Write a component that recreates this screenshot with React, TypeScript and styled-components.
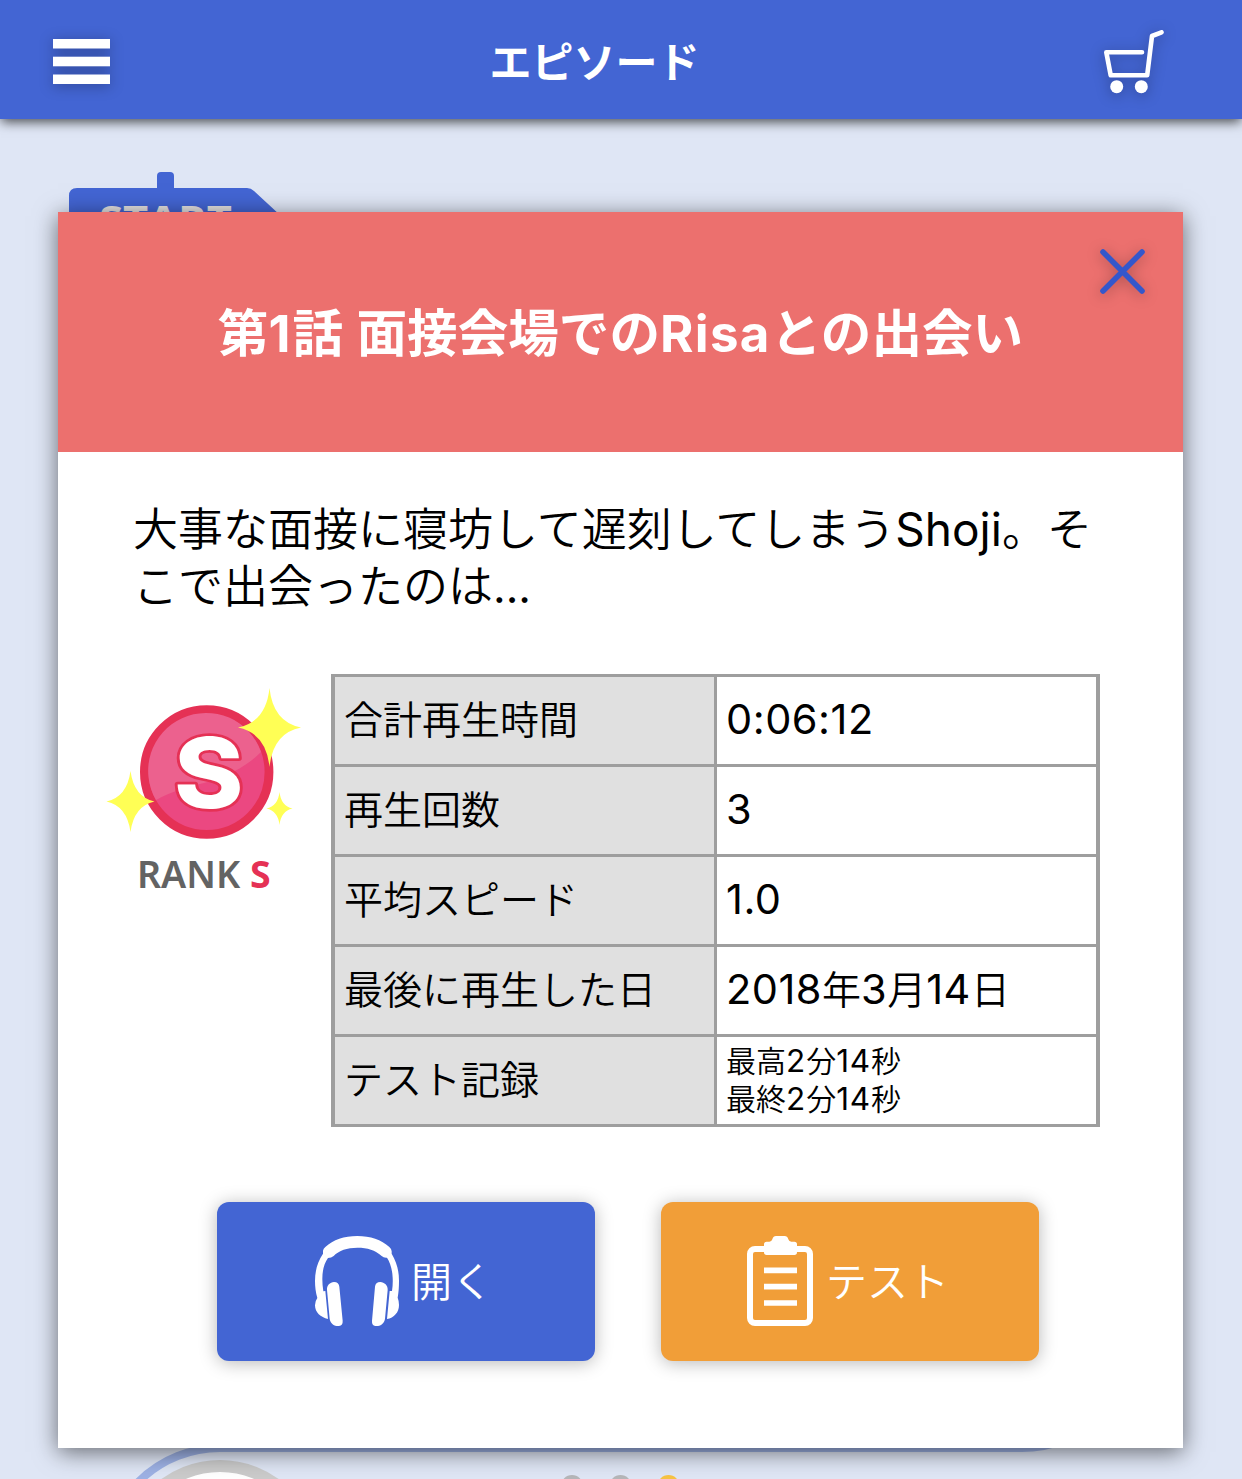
import React from "react";
import styled, { createGlobalStyle } from "styled-components";

const colors = {
  blue: "#4365d3",
  sky: "#dfe6f5",
  coral: "#ec706e",
  orange: "#f19e38",
  line: "#9e9e9e",
  label: "#e0e0e0",
  route: "#9db1e4",
};

const GlobalStyle = createGlobalStyle`
  * { box-sizing: border-box; }
  html, body { margin: 0; padding: 0; }
  body {
    font-family: "Noto Sans CJK JP", sans-serif;
    color: #000;
    background: ${colors.sky};
    overflow: hidden;
  }
  button { font: inherit; border: 0; padding: 0; background: none; }
  svg { display: block; overflow: visible; }
`;

const Page = styled.div`
  position: relative;
  width: 1242px;
  height: 1479px;
  display: flex;
  flex-direction: column;
  overflow: hidden;
  background: ${colors.sky};
`;

const TopBar = styled.header`
  flex: none;
  height: 119px;
  padding: 4px 78px 0 53px;
  display: grid;
  grid-template-columns: 60px 1fr 60px;
  align-items: center;
  background: ${colors.blue};
  box-shadow: 0 4px 11px -1px rgba(0, 0, 0, 0.68);
`;

const TopTitle = styled.h1`
  margin: -4px 0 0 -28px;
  font-size: 42px;
  line-height: 60px;
  font-weight: 700;
  color: #fff;
  text-align: center;
`;

const IconButton = styled.button`
  display: block;
  filter: drop-shadow(0 2px 7px rgba(0, 0, 0, 0.3));
`;

const Course = styled.main`
  flex: 1;
  display: flex;
  flex-direction: column;
  justify-content: space-between;
`;

const SignHolder = styled.div`
  padding: 53px 0 0 69px;
`;

const Dialog = styled.section`
  position: absolute;
  left: 58px;
  top: 212px;
  width: 1125px;
  height: 1236px;
  display: flex;
  flex-direction: column;
  background: #fff;
  box-shadow: 0 4px 22px rgba(0, 0, 0, 0.55);
`;

const DialogHead = styled.div`
  position: relative;
  flex: none;
  height: 240px;
  display: flex;
  align-items: center;
  justify-content: center;
  padding-bottom: 5px;
  background: ${colors.coral};
`;

const DialogTitle = styled.h2`
  margin: 0;
  font-size: 50.6px;
  line-height: 60px;
  font-weight: 700;
  color: #fff;
  white-space: nowrap;
  word-spacing: 2px;
`;

const CloseButton = styled(IconButton)`
  position: absolute;
  right: 38px;
  top: 37px;
`;

const Latin = styled.span<{ $size: number; $spacing?: number }>`
  font-family: Inter, sans-serif;
  font-size: ${(p) => p.$size}px;
  letter-spacing: ${(p) => p.$spacing ?? 0}px;
  line-height: 1;
`;

const Summary = styled.p`
  margin: 46px 0 0 75px;
  font-size: 45px;
  line-height: 57px;
  font-weight: 350;
  white-space: nowrap;
  ${Latin} { font-weight: 400; }
`;

const Details = styled.div`
  display: flex;
  align-items: flex-start;
  margin-top: 62px;
  padding-left: 49px;
`;

const Rank = styled.div`
  width: 224px;
  padding-top: 14px;
`;

const RankLabel = styled.div`
  width: 200px;
  padding-left: 30px;
  margin-top: 7px;
  font-family: "Noto Sans", sans-serif;
  font-size: 37.5px;
  line-height: 54px;
  font-weight: 600;
  color: #636363;
  white-space: nowrap;
  b { color: #e53155; font-weight: 700; }
`;

const Stats = styled.dl`
  margin: 0;
  width: 769px;
  border: solid ${colors.line};
  border-width: 3px 4px 0;
`;

const StatRow = styled.div`
  display: grid;
  grid-template-columns: 382px 1fr;
  height: 90px;
  border-bottom: 3px solid ${colors.line};
`;

const StatLabel = styled.dt`
  padding-left: 9px;
  border-right: 3px solid ${colors.line};
  background: ${colors.label};
  font-size: 39px;
  line-height: 81px;
  font-weight: 350;
  white-space: nowrap;
`;

const StatValue = styled.dd<{ $small?: boolean }>`
  margin: 0;
  padding-left: 9px;
  padding-top: ${(p) => (p.$small ? 3 : 0)}px;
  font-size: ${(p) => (p.$small ? 30 : 39)}px;
  line-height: ${(p) => (p.$small ? 38 : 81)}px;
  font-weight: 350;
  white-space: nowrap;
  ${Latin} { font-weight: 400; }
`;

const Actions = styled.div`
  display: flex;
  gap: 66px;
  margin: 75px 0 0 159.4px;
`;

const ActionButton = styled.button<{ $color: string; $inset: number; $gap: number }>`
  width: 378px;
  height: 159px;
  display: flex;
  align-items: center;
  gap: ${(p) => p.$gap}px;
  padding-left: ${(p) => p.$inset}px;
  padding-bottom: 1px;
  border-radius: 12px;
  background: ${(p) => p.$color};
  box-shadow: 0 2px 18px rgba(0, 0, 0, 0.28);
  color: #fff;
`;

const ActionText = styled.span`
  padding-bottom: 5px;
  font-size: 41px;
  line-height: 60px;
  font-weight: 350;
  white-space: nowrap;
`;

const MenuIcon = () => (
  <svg width="57" height="45" viewBox="0 0 57 45" fill="#fff">
    <rect width="57" height="9.5" />
    <rect y="17.7" width="57" height="9.6" />
    <rect y="35.5" width="57" height="9.5" />
  </svg>
);

const CartIcon = () => (
  <svg width="60" height="63" viewBox="0 0 60 63">
    <path
      d="M38 22.2H2.3L6.7 45.2H43.2L48 6L57.5 2.3"
      fill="none"
      stroke="#fff"
      strokeWidth="4.6"
      strokeLinecap="round"
      strokeLinejoin="round"
    />
    <circle cx="12.7" cy="56.7" r="6.5" fill="#fff" />
    <circle cx="37.3" cy="56.7" r="6.5" fill="#fff" />
  </svg>
);

const CloseIcon = () => (
  <svg width="45" height="45" viewBox="0 0 45 45">
    <path d="M3 3L42 42M42 3L3 42" stroke="#3457cb" strokeWidth="5.6" strokeLinecap="round" />
  </svg>
);

const StartSign = () => (
  <svg width="230" height="100" viewBox="0 0 230 100">
    <rect x="88" y="0" width="17" height="40" rx="4" fill={colors.blue} />
    <path d="M0 24Q0 16 8 16H178Q182 16 185 19L225 56L185 94H0Z" fill={colors.blue} />
    <text
      x="30"
      y="62"
      textLength="133"
      lengthAdjust="spacingAndGlyphs"
      fill="#e4e1e0"
      fontFamily="Open Sans, sans-serif"
      fontWeight="700"
      fontSize="39"
    >
      START
    </text>
  </svg>
);

const CourseMap = () => (
  <svg width="1242" height="149" viewBox="0 1330 1242 149">
    <path
      d="M105 1563A115 115 0 0 1 220 1448H1022A115 115 0 0 0 1137 1333"
      fill="none"
      stroke={colors.route}
      strokeWidth="8"
    />
    <circle cx="220" cy="1560" r="94" fill="#fff" stroke="#cbcbcb" strokeWidth="12" />
    <circle cx="572" cy="1486" r="11" fill="#b5b6b9" />
    <circle cx="620.5" cy="1486" r="11" fill="#b5b6b9" />
    <circle cx="668.5" cy="1486" r="11" fill="#f6c344" />
  </svg>
);

const RankBadge = () => (
  <svg width="196" height="152" viewBox="107 688 196 152">
    <circle cx="206.7" cy="772" r="62.3" fill="#eb4881" stroke="#e53155" strokeWidth="8.8" />
    <path
      d="M156 800A58 58 0 1 1 261 752C246 767 228 776 204 783C184 788 170 792 156 800Z"
      fill="#ec618e"
    />
    <text
      transform="translate(208.8 807.5) scale(1.08 1)"
      textAnchor="middle"
      fontFamily="Inter, sans-serif"
      fontWeight="800"
      fontSize="97.5"
      fill="#fff"
      stroke="#e53155"
      strokeWidth="5.5"
      strokeLinejoin="round"
      paintOrder="stroke"
    >
      S
    </text>
    <g fill="#ffff55">
      <path d="M269.5 688Q273 722 301 727.5Q273 733 269.5 767Q266 733 238 727.5Q266 722 269.5 688Z" />
      <path d="M130.5 771Q134 797 154.5 801.5Q134 806 130.5 832Q127 806 106.5 801.5Q127 797 130.5 771Z" />
      <path d="M279.5 792Q281 806 292.5 808.5Q281 811 279.5 825Q278 811 266.5 808.5Q278 806 279.5 792Z" />
    </g>
  </svg>
);

const HeadphonesIcon = () => (
  <svg width="84" height="90" viewBox="345 138 252 270" fill="#fff">
    <path d="M369 182Q370 176 376 171C400 149 432 138 472 138C511 138 544 149 568 171Q575 177 575 184V191C590 216 597 242 597 272C597 291 596 306 593 323Q597 333 597 345C597 367 582 384 561 387L569 303H576Q579 285 578 263C577 240 571 218 561 203Q551 204 545 198C525 180 503 173 472 173C441 173 417 181 401 198Q394 204 384 204C373 220 367 239 367 267Q367 287 370 304L376 303L384 387C362 382 345 368 345 346Q345 333 352 324C347 306 345 291 345 273C345 242 353 214 369 191Z" />
    <path d="M381 300C380 286 390 277 402 276C412 276 417 281 418 290L428 392Q429 406 417 408H410C399 406 390 397 389 386Z" />
    <path d="M563 300C564 286 553 277 541 276C531 276 526 281 525 290L516 392Q515 406 526 408H534C545 406 554 397 555 386Z" />
  </svg>
);

const ClipboardIcon = () => (
  <svg width="66" height="90" viewBox="291 138 198 270">
    <rect x="300" y="177" width="180" height="222" rx="15" fill="none" stroke="#fff" strokeWidth="18" />
    <path
      d="M342 163Q342 155 350 155H358Q365 155 367 148Q370 138 378 138H404Q412 138 415 148Q417 155 424 155H433Q441 155 441 163V187Q441 195 433 195H350Q342 195 342 187Z"
      fill="#fff"
    />
    <path d="M342 241H441M342 290H441M342 339H441" stroke="#fff" strokeWidth="17" />
  </svg>
);

const Figure = ({ children }: { children: React.ReactNode }) => (
  <Latin $size={41.5} $spacing={0.5}>
    {children}
  </Latin>
);

const SmallFigure = ({ children }: { children: React.ReactNode }) => (
  <Latin $size={31.5} $spacing={0.9}>
    {children}
  </Latin>
);

export default function App() {
  return (
    <>
      <GlobalStyle />
      <Page>
        <TopBar>
          <IconButton aria-label="メニュー">
            <MenuIcon />
          </IconButton>
          <TopTitle>エピソード</TopTitle>
          <IconButton aria-label="カート">
            <CartIcon />
          </IconButton>
        </TopBar>
        <Course>
          <SignHolder>
            <StartSign />
          </SignHolder>
          <CourseMap />
        </Course>
        <Dialog role="dialog">
          <DialogHead>
            <DialogTitle>
              第<Latin $size={51} $spacing={2}>1</Latin>話 面接会場での
              <Latin $size={51} $spacing={1.3}>Risa</Latin>との出会い
            </DialogTitle>
            <CloseButton aria-label="閉じる">
              <CloseIcon />
            </CloseButton>
          </DialogHead>
          <Summary>
            大事な面接に寝坊して遅刻してしまう<Latin $size={46}>Shoji</Latin>。そ
            <br />
            こで出会ったのは<Latin $size={44}>...</Latin>
          </Summary>
          <Details>
            <Rank>
              <RankBadge />
              <RankLabel>
                RANK <b>S</b>
              </RankLabel>
            </Rank>
            <Stats>
              <StatRow>
                <StatLabel>合計再生時間</StatLabel>
                <StatValue>
                  <Figure>0:06:12</Figure>
                </StatValue>
              </StatRow>
              <StatRow>
                <StatLabel>再生回数</StatLabel>
                <StatValue>
                  <Figure>3</Figure>
                </StatValue>
              </StatRow>
              <StatRow>
                <StatLabel>平均スピード</StatLabel>
                <StatValue>
                  <Figure>1.0</Figure>
                </StatValue>
              </StatRow>
              <StatRow>
                <StatLabel>最後に再生した日</StatLabel>
                <StatValue>
                  <Figure>2018</Figure>年<Figure>3</Figure>月<Figure>14</Figure>日
                </StatValue>
              </StatRow>
              <StatRow>
                <StatLabel>テスト記録</StatLabel>
                <StatValue $small>
                  最高<SmallFigure>2</SmallFigure>分<SmallFigure>14</SmallFigure>秒
                  <br />
                  最終<SmallFigure>2</SmallFigure>分<SmallFigure>14</SmallFigure>秒
                </StatValue>
              </StatRow>
            </Stats>
          </Details>
          <Actions>
            <ActionButton $color={colors.blue} $inset={97.6} $gap={12}>
              <HeadphonesIcon />
              <ActionText>開く</ActionText>
            </ActionButton>
            <ActionButton $color={colors.orange} $inset={85.6} $gap={13}>
              <ClipboardIcon />
              <ActionText>テスト</ActionText>
            </ActionButton>
          </Actions>
        </Dialog>
      </Page>
    </>
  );
}
